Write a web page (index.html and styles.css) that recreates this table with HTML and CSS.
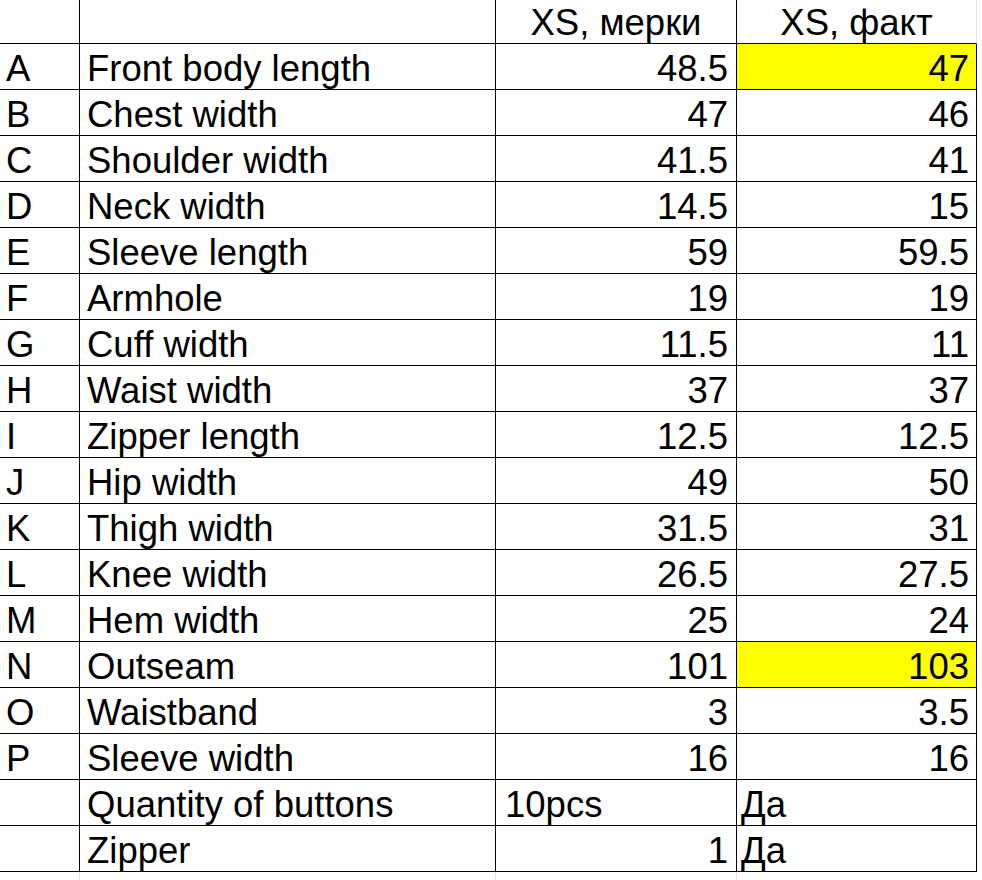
FILE: index.html
```html
<!DOCTYPE html>
<html lang="ru">
<head>
<meta charset="utf-8">
<title>Size chart</title>
<link rel="stylesheet" href="styles.css">
</head>
<body>
<div class="sheet">
  <div class="c h k"></div><div class="c h n"></div><div class="c h v ctr">XS, мерки</div><div class="c h v ctr last-h">XS, факт</div>

  <div class="c k">A</div><div class="c n">Front body length</div><div class="c v">48.5</div><div class="c v last hl">47</div>
  <div class="c k">B</div><div class="c n">Chest width</div><div class="c v">47</div><div class="c v last">46</div>
  <div class="c k">C</div><div class="c n">Shoulder width</div><div class="c v">41.5</div><div class="c v last">41</div>
  <div class="c k">D</div><div class="c n">Neck width</div><div class="c v">14.5</div><div class="c v last">15</div>
  <div class="c k">E</div><div class="c n">Sleeve length</div><div class="c v">59</div><div class="c v last">59.5</div>
  <div class="c k">F</div><div class="c n">Armhole</div><div class="c v">19</div><div class="c v last">19</div>
  <div class="c k">G</div><div class="c n">Cuff width</div><div class="c v">11.5</div><div class="c v last">11</div>
  <div class="c k">H</div><div class="c n">Waist width</div><div class="c v">37</div><div class="c v last">37</div>
  <div class="c k">I</div><div class="c n">Zipper length</div><div class="c v">12.5</div><div class="c v last">12.5</div>
  <div class="c k">J</div><div class="c n">Hip width</div><div class="c v">49</div><div class="c v last">50</div>
  <div class="c k">K</div><div class="c n">Thigh width</div><div class="c v">31.5</div><div class="c v last">31</div>
  <div class="c k">L</div><div class="c n">Knee width</div><div class="c v">26.5</div><div class="c v last">27.5</div>
  <div class="c k">M</div><div class="c n">Hem width</div><div class="c v">25</div><div class="c v last">24</div>
  <div class="c k">N</div><div class="c n">Outseam</div><div class="c v">101</div><div class="c v last hl">103</div>
  <div class="c k">O</div><div class="c n">Waistband</div><div class="c v">3</div><div class="c v last">3.5</div>
  <div class="c k">P</div><div class="c n">Sleeve width</div><div class="c v">16</div><div class="c v last">16</div>
  <div class="c k"></div><div class="c n">Quantity of buttons</div><div class="c t pcs">10pcs</div><div class="c t da last">Да</div>
  <div class="c k"></div><div class="c n">Zipper</div><div class="c v">1</div><div class="c t da last">Да</div>

  <div class="f"></div><div class="f"></div><div class="f"></div><div class="f fl"></div>
</div>
</body>
</html>
```

FILE: styles.css
```css
html, body {
  margin: 0;
  padding: 0;
  background: #ffffff;
}

.sheet {
  display: grid;
  grid-template-columns: 80px 416px 241px 240px;
  font-family: "Liberation Sans", Arial, sans-serif;
  font-size: 36.5px;
  color: #000;
}

.c {
  box-sizing: border-box;
  height: 46px;
  padding-top: 5px;
  line-height: 40px;
  border-right: 1px solid #000;
  border-bottom: 1px solid #000;
  white-space: nowrap;
  overflow: hidden;
}

.c.h {
  height: 44px;
  padding-top: 3px;
}

.c.last-h {
  border-right-color: #e2e2e2;
}

.k {
  padding-left: 6px;
}

.n {
  padding-left: 7px;
}

.v {
  text-align: right;
  padding-right: 8px;
}

.v.last {
  padding-right: 7px;
}

.v.ctr {
  text-align: center;
  padding-right: 0;
  padding-left: 0;
}

.t {
  text-align: left;
}

.pcs {
  padding-left: 9px;
}

.da {
  padding-left: 4px;
}

.hl {
  background: #ffff00;
}

.f {
  box-sizing: border-box;
  height: 8px;
  border-right: 1px solid #e4e4e4;
}

.f.fl {
  border-right: none;
}
```
